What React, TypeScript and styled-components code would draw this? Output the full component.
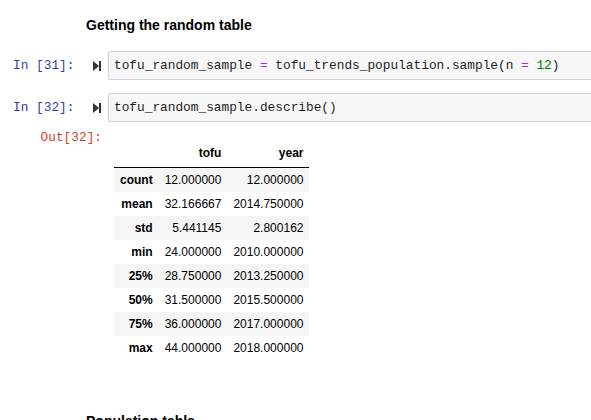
import React from "react";
import styled, { createGlobalStyle } from "styled-components";

const GlobalStyle = createGlobalStyle`
  html, body {
    margin: 0;
    padding: 0;
    background: #ffffff;
    overflow: hidden;
  }
  body {
    font-family: "Liberation Sans", Arial, sans-serif;
  }
`;

const Notebook = styled.div`
  width: 640px;
  padding-top: 17px;
  display: flex;
  flex-direction: column;
`;

const MarkdownCell = styled.div<{ $top?: number }>`
  padding-left: 86px;
  margin-top: ${(p) => p.$top ?? 0}px;
`;

const Heading = styled.h4`
  margin: 0;
  font-family: "Liberation Sans", Arial, sans-serif;
  font-size: 14px;
  line-height: 16px;
  font-weight: bold;
  color: #000;
`;

const CodeCell = styled.div<{ $top: number }>`
  margin-top: ${(p) => p.$top}px;
  display: flex;
  flex-direction: column;
`;

const InputRow = styled.div`
  display: flex;
  align-items: center;
`;

const PromptArea = styled.div`
  width: 108px;
  flex: none;
  display: flex;
  align-items: center;
  padding-left: 13px;
  padding-right: 7px;
  box-sizing: border-box;
`;

const PromptText = styled.span<{ $kind: "in" | "out" }>`
  font-family: "Liberation Mono", "DejaVu Sans Mono", monospace;
  font-size: 12.8px;
  line-height: 17px;
  color: ${(p) => (p.$kind === "in" ? "#303F9F" : "#D84315")};
  white-space: pre;
`;

const RunIcon = styled.svg`
  margin-left: auto;
  display: block;
`;

const InputBox = styled.div`
  flex: 1;
  background: #f7f7f7;
  border: 1px solid #cfcfcf;
  border-radius: 2px;
  padding: 5px 5px;
  font-family: "Liberation Mono", "DejaVu Sans Mono", monospace;
  font-size: 12.8px;
  line-height: 17px;
  color: #1e1e1e;
  white-space: pre;
`;

const Op = styled.span`
  color: #aa22ff;
`;

const Num = styled.span`
  color: #008000;
`;

const OutputRow = styled.div`
  display: flex;
  align-items: flex-start;
`;

const OutPrompt = styled.div`
  width: 108px;
  flex: none;
  box-sizing: border-box;
  padding-top: 5px;
  padding-right: 6px;
  text-align: right;
`;

const OutputSubarea = styled.div`
  padding-left: 6px;
  padding-top: 19px;
`;

const Table = styled.table`
  border-collapse: collapse;
  border-spacing: 0;
  font-family: "Liberation Sans", Arial, sans-serif;
  font-size: 12px;
  color: #000;
`;

const HeadRow = styled.tr`
  border-bottom: 1px solid #000;
`;

const BodyRow = styled.tr<{ $striped: boolean }>`
  background: ${(p) => (p.$striped ? "#f5f5f5" : "transparent")};
`;

const Th = styled.th<{ $head?: boolean }>`
  text-align: right;
  vertical-align: middle;
  padding: ${(p) => (p.$head ? "6px 6px 8px" : "6px")};
  line-height: 12px;
  font-weight: bold;
  white-space: nowrap;
`;

const Td = styled.td`
  text-align: right;
  vertical-align: middle;
  padding: 6px;
  line-height: 12px;
  white-space: nowrap;
`;

const rows: [string, string, string][] = [
  ["count", "12.000000", "12.000000"],
  ["mean", "32.166667", "2014.750000"],
  ["std", "5.441145", "2.800162"],
  ["min", "24.000000", "2010.000000"],
  ["25%", "28.750000", "2013.250000"],
  ["50%", "31.500000", "2015.500000"],
  ["75%", "36.000000", "2017.000000"],
  ["max", "44.000000", "2018.000000"],
];

const StepForward = () => (
  <RunIcon width="8" height="10" viewBox="0 0 8 10">
    <polygon points="0,0 6,5 0,10" fill="#333" />
    <rect x="6" y="0" width="2" height="10" fill="#333" />
  </RunIcon>
);

export default function App() {
  return (
    <>
      <GlobalStyle />
      <Notebook>
        <MarkdownCell>
          <Heading>Getting the random table</Heading>
        </MarkdownCell>

        <CodeCell $top={18}>
          <InputRow>
            <PromptArea>
              <PromptText $kind="in">In [31]:</PromptText>
              <StepForward />
            </PromptArea>
            <InputBox>
              tofu_random_sample <Op>=</Op> tofu_trends_population.sample(n <Op>=</Op> <Num>12</Num>)
            </InputBox>
          </InputRow>
        </CodeCell>

        <CodeCell $top={13}>
          <InputRow>
            <PromptArea>
              <PromptText $kind="in">In [32]:</PromptText>
              <StepForward />
            </PromptArea>
            <InputBox>tofu_random_sample.describe()</InputBox>
          </InputRow>
          <OutputRow>
            <OutPrompt>
              <PromptText $kind="out">Out[32]:</PromptText>
            </OutPrompt>
            <OutputSubarea>
              <Table>
                <thead>
                  <HeadRow>
                    <Th $head></Th>
                    <Th $head>tofu</Th>
                    <Th $head>year</Th>
                  </HeadRow>
                </thead>
                <tbody>
                  {rows.map(([label, tofu, year], i) => (
                    <BodyRow key={label} $striped={i % 2 === 0}>
                      <Th>{label}</Th>
                      <Td>{tofu}</Td>
                      <Td>{year}</Td>
                    </BodyRow>
                  ))}
                </tbody>
              </Table>
            </OutputSubarea>
          </OutputRow>
        </CodeCell>

        <MarkdownCell $top={53}>
          <Heading>Population table</Heading>
        </MarkdownCell>
      </Notebook>
    </>
  );
}
